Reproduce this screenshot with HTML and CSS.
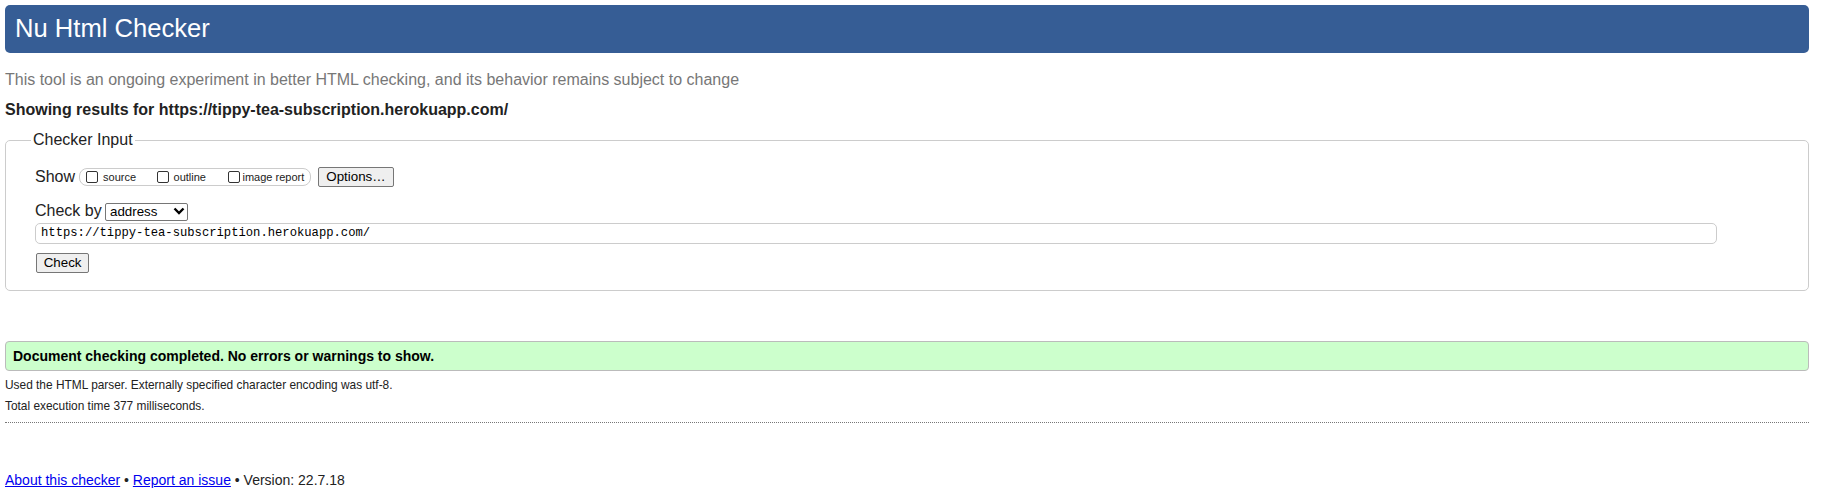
FILE: index.html
```html
<!DOCTYPE html>
<html lang="en">
<head>
<meta charset="utf-8">
<title>Showing results for https://tippy-tea-subscription.herokuapp.com/ - Nu Html Checker</title>
<link rel="stylesheet" href="styles.css">
</head>
<body>
<h1 class="title">Nu Html Checker</h1>
<p class="intro">This tool is an ongoing experiment in better HTML checking, and its behavior remains subject to change</p>
<p class="results-for">Showing results for https://tippy-tea-subscription.herokuapp.com/</p>
<form class="checker">
  <fieldset class="checker-input">
    <legend class="legend">Checker Input</legend>
    <div class="row row-show">
      <span class="label">Show</span>
      <span class="show-group">
        <label class="opt opt-source"><input type="checkbox" class="cb"><span class="opt-text">source</span></label>
        <label class="opt opt-outline"><input type="checkbox" class="cb"><span class="opt-text">outline</span></label>
        <label class="opt opt-image"><input type="checkbox" class="cb"><span class="opt-text">image report</span></label>
      </span>
      <button type="button" class="btn btn-options">Options…</button>
    </div>
    <div class="row row-checkby">
      <span class="label">Check by</span>
      <span class="select-wrap">
        <select class="select"><option>address</option></select>
        <svg class="chev" width="12" height="8" viewBox="0 0 12 8"><path d="M1.5 1.5 L6 6 L10.5 1.5" fill="none" stroke="#000" stroke-width="2.4"/></svg>
      </span>
    </div>
    <div class="row row-url">
      <input class="url" type="text" value="https://tippy-tea-subscription.herokuapp.com/">
    </div>
    <div class="row row-submit">
      <button type="button" class="btn btn-check">Check</button>
    </div>
  </fieldset>
</form>
<p class="success">Document checking completed. No errors or warnings to show.</p>
<p class="details details-first">Used the HTML parser. Externally specified character encoding was utf-8.</p>
<p class="details">Total execution time 377 milliseconds.</p>
<hr class="sep">
<p class="footer"><a class="link" href="#">About this checker</a> • <a class="link" href="#">Report an issue</a> • Version: 22.7.18</p>
</body>
</html>
```

FILE: styles.css
```css
html, body {
  margin: 0;
  padding: 0;
}

body {
  padding-right: 10px;
  font-family: "Liberation Sans", Arial, sans-serif;
  font-size: 16px;
  color: #222;
  background: #fff;
}

.title {
  margin: 5px 5px 0;
  padding: 9px 10px;
  background: #365d95;
  color: #fff;
  font-size: 25.6px;
  font-weight: normal;
  line-height: 29.6px;
  border-radius: 5px;
}

.intro {
  margin: 18px 5px 0;
  color: #777;
  line-height: 18.4px;
}

.results-for {
  margin: 11.5px 5px 0;
  font-weight: bold;
  line-height: 18.4px;
}

.checker {
  margin: 12px 5px 0;
}

.checker-input {
  margin: 0;
  min-width: 0;
  padding: 18px 91px 17px 29px;
  border: 1px solid #ccc;
  border-radius: 5px;
}

.legend {
  margin-left: -4px;
  padding: 0 2px;
  line-height: 18.4px;
}

.row {
  display: flex;
  align-items: center;
}

.row-show {
  height: 20px;
}

.label {
  line-height: 18.4px;
  white-space: nowrap;
}

.show-group {
  display: inline-flex;
  align-items: center;
  box-sizing: border-box;
  height: 18px;
  margin-left: 4px;
  padding: 0 6px 0 6px;
  border: 1px solid #ccc;
  border-radius: 8px;
  font-size: 11px;
  color: #222;
}

.opt {
  display: inline-flex;
  align-items: center;
}

.cb {
  appearance: none;
  -webkit-appearance: none;
  box-sizing: border-box;
  width: 12px;
  height: 12px;
  margin: 0;
  border: 1px solid #333;
  border-radius: 2px;
  background: #fff;
}

.opt-source .opt-text {
  margin-left: 5px;
}

.opt-source {
  margin-right: 21px;
}

.opt-outline .opt-text {
  margin-left: 4.5px;
}

.opt-outline {
  margin-right: 22px;
}

.opt-image .opt-text {
  margin-left: 2.5px;
}

.btn {
  box-sizing: border-box;
  height: 20px;
  margin: 0;
  padding: 0 7px;
  border: 1px solid #767676;
  border-radius: 2px;
  background: #efefef;
  color: #000;
  font-family: "Liberation Sans", Arial, sans-serif;
  font-size: 13.33px;
  line-height: 18px;
}

.btn-options {
  margin-left: 6.5px;
  padding: 0 7.6px;
}

.row-checkby {
  height: 18px;
  margin-top: 14.4px;
}

.select-wrap {
  position: relative;
  display: inline-block;
  height: 18px;
  margin-left: 3.3px;
}

.select {
  appearance: none;
  -webkit-appearance: none;
  box-sizing: border-box;
  width: 83px;
  height: 18px;
  margin: 0;
  padding: 0 0 0 4px;
  border: 1px solid #767676;
  border-radius: 2px;
  background: #fff;
  color: #000;
  font-family: "Liberation Sans", Arial, sans-serif;
  font-size: 13.33px;
  line-height: 16px;
}

.chev {
  position: absolute;
  right: 3px;
  top: 5px;
  pointer-events: none;
}

.row-url {
  margin-top: 3px;
}

.url {
  box-sizing: border-box;
  width: 100%;
  height: 21px;
  margin: 0;
  padding: 0 5px;
  border: 1px solid #ccc;
  border-radius: 5px;
  color: #000;
  font-family: "Liberation Mono", "DejaVu Sans Mono", monospace;
  font-size: 12.2px;
}

.row-submit {
  margin-top: 9px;
}

.btn-check {
  margin-left: 0.7px;
}

.success {
  margin: 50px 5px 0;
  padding: 6px 7px;
  border: 1px solid #bbb;
  border-radius: 4px;
  background: #ccffcc;
  color: #000;
  font-size: 14px;
  font-weight: bold;
  line-height: 16.1px;
}

.details {
  margin: 7px 5px 0;
  font-size: 11.9px;
  line-height: 13.8px;
}

.details-first {
  margin-top: 8px;
}

.sep {
  height: 0;
  margin: 8.5px 5px 0;
  border: 0;
  border-top: 1px dotted #777;
}

.footer {
  margin: 49.5px 5px 0;
  font-size: 14px;
  line-height: 16.1px;
}

.link {
  color: #0000ee;
  text-decoration: underline;
}
```
